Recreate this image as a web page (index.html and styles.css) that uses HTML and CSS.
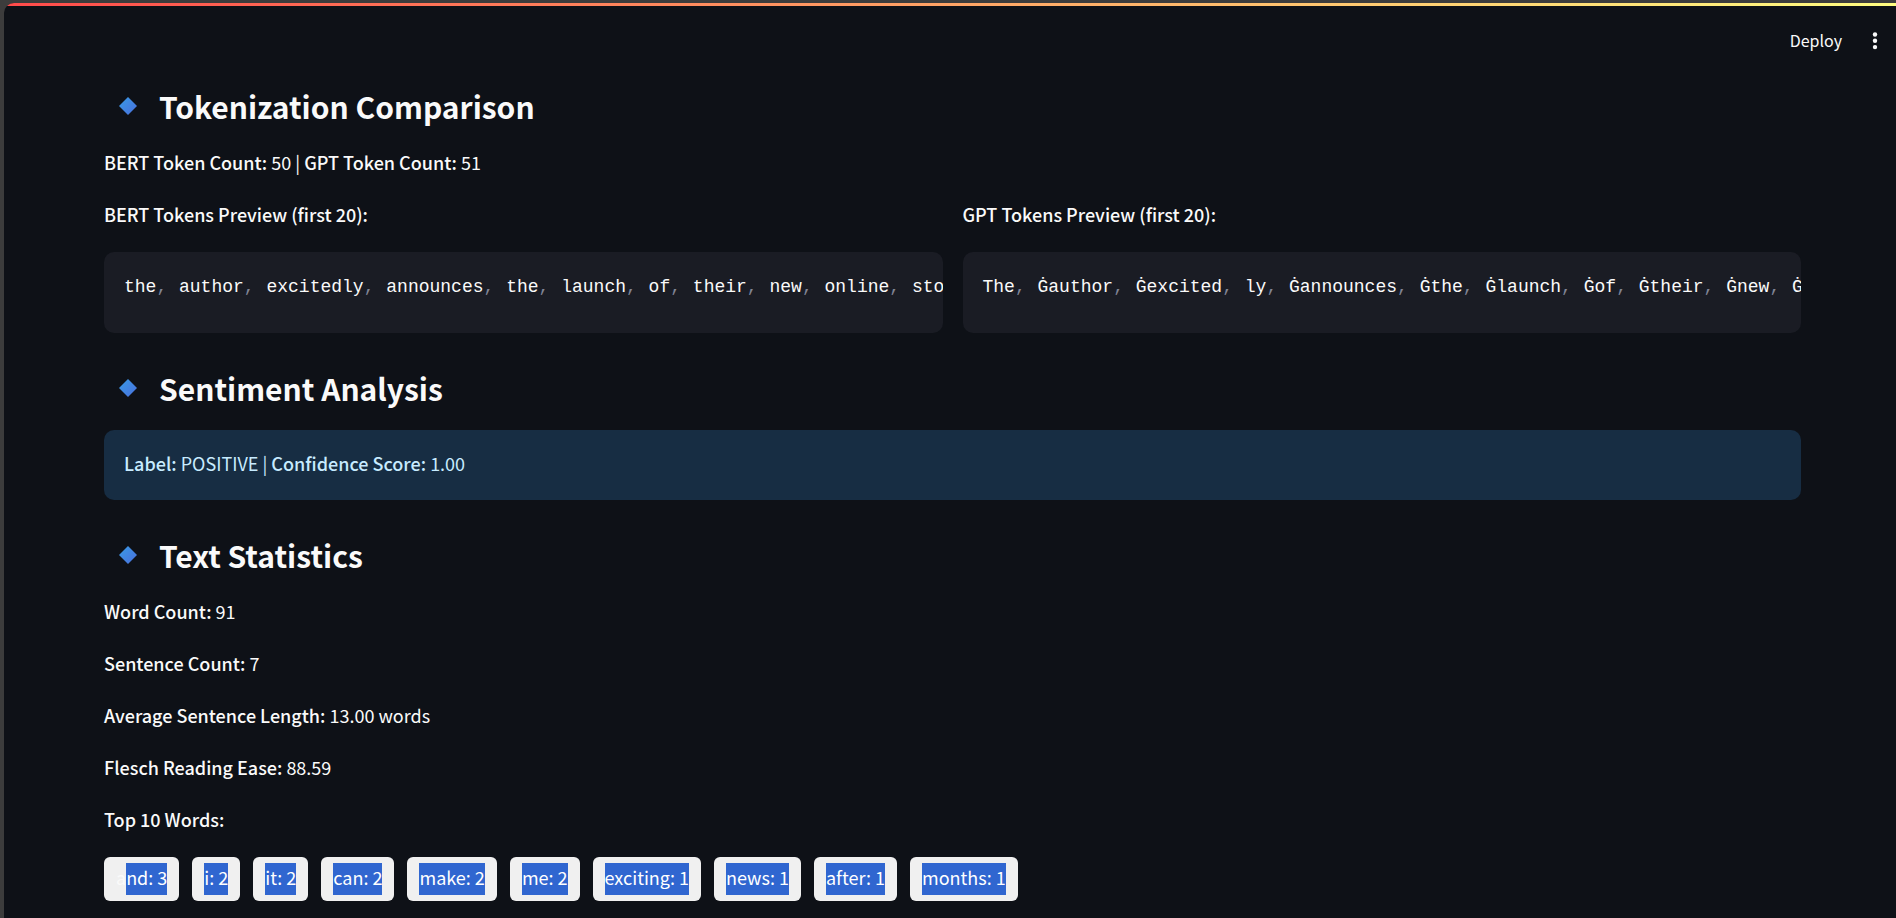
FILE: index.html
```html
<!DOCTYPE html>
<html lang="en">
<head>
<meta charset="utf-8">
<title>Text Analysis</title>
<link rel="stylesheet" href="styles.css">
</head>
<body>
<svg class="defs" aria-hidden="true">
  <defs>
    <linearGradient id="blue" x1="0" y1="0" x2="1" y2="1">
      <stop offset="0" stop-color="#389be6"/>
      <stop offset="1" stop-color="#4a6fdc"/>
    </linearGradient>
    <symbol id="diamond" viewBox="0 0 18 18"><path d="M9 0 18 9 9 18 0 9Z" fill="url(#blue)"/></symbol>
  </defs>
</svg>
<div class="app">
  <div class="decoration"></div>
  <header class="toolbar">
    <button class="deploy" type="button">Deploy</button>
    <button class="menu" type="button" aria-label="Main menu">
      <svg width="6" height="18" viewBox="0 0 6 18" fill="#fafafa"><circle cx="3" cy="2.5" r="2.2"/><circle cx="3" cy="8.8" r="2.2"/><circle cx="3" cy="15.1" r="2.2"/></svg>
    </button>
  </header>
  <main class="content">
    <h2><svg class="mark" aria-hidden="true"><use href="#diamond"/></svg>Tokenization Comparison</h2>
    <p><strong>BERT Token Count:</strong> 50 | <strong>GPT Token Count:</strong> 51</p>
    <div class="columns">
      <section class="column">
        <p><strong>BERT Tokens Preview (first 20):</strong></p>
        <pre class="code"><code>the<i>,</i> author<i>,</i> excitedly<i>,</i> announces<i>,</i> the<i>,</i> launch<i>,</i> of<i>,</i> their<i>,</i> new<i>,</i> online<i>,</i> store</code></pre>
      </section>
      <section class="column">
        <p><strong>GPT Tokens Preview (first 20):</strong></p>
        <pre class="code"><code>The<i>,</i> Ġauthor<i>,</i> Ġexcited<i>,</i> ly<i>,</i> Ġannounces<i>,</i> Ġthe<i>,</i> Ġlaunch<i>,</i> Ġof<i>,</i> Ġtheir<i>,</i> Ġnew<i>,</i> Ġonline</code></pre>
      </section>
    </div>
    <h2><svg class="mark" aria-hidden="true"><use href="#diamond"/></svg>Sentiment Analysis</h2>
    <div class="alert"><strong>Label:</strong> POSITIVE | <strong>Confidence Score:</strong> 1.00</div>
    <h2><svg class="mark" aria-hidden="true"><use href="#diamond"/></svg>Text Statistics</h2>
    <p><strong>Word Count:</strong> 91</p>
    <p><strong>Sentence Count:</strong> 7</p>
    <p><strong>Average Sentence Length:</strong> 13.00 words</p>
    <p><strong>Flesch Reading Ease:</strong> 88.59</p>
    <p><strong>Top 10 Words:</strong></p>
    <div class="chips">
      <span class="chip">a<mark>nd: 3</mark></span>
      <span class="chip"><mark>i: 2</mark></span>
      <span class="chip"><mark>it: 2</mark></span>
      <span class="chip"><mark>can: 2</mark></span>
      <span class="chip"><mark>make: 2</mark></span>
      <span class="chip"><mark>me: 2</mark></span>
      <span class="chip"><mark>exciting: 1</mark></span>
      <span class="chip"><mark>news: 1</mark></span>
      <span class="chip"><mark>after: 1</mark></span>
      <span class="chip"><mark>months: 1</mark></span>
    </div>
  </main>
</div>
</body>
</html>
```
FILE: styles.css
```css
* { box-sizing: border-box; }

body {
  margin: 0;
  padding: 3px 0 0 4px;
  background: #3c3c3c;
  color: #fafafa;
  font: 18px/28px "Noto Sans CJK SC", "Open Sans", sans-serif;
}

.defs { position: absolute; width: 0; height: 0; }

.app {
  min-height: calc(100vh - 3px);
  overflow: hidden;
  border-top-left-radius: 10px;
  background: #0e1117;
}

.decoration {
  height: 3px;
  background: linear-gradient(90deg, #ff4b4b, #fffd80);
}

.toolbar {
  display: flex;
  justify-content: flex-end;
  align-items: center;
  gap: 30px;
  height: 70px;
  padding-right: 18px;
}

.toolbar button {
  padding: 0;
  border: 0;
  background: none;
  color: inherit;
  font: inherit;
  font-size: 16px;
  line-height: 24px;
}

.toolbar .deploy { padding-bottom: 2px; }

.menu { display: flex; }

.content { padding: 0 95px 16px 100px; }

h2 {
  display: flex;
  align-items: center;
  gap: 22px;
  margin: 36px 0 23px;
  padding-left: 15px;
  font-size: 30px;
  font-weight: 700;
  line-height: 38px;
}

h2:first-child { margin-top: 11px; }

.mark { width: 18px; height: 18px; }

p { margin: 0 0 24px; }

strong { font-weight: 500; }

.columns {
  display: grid;
  grid-template-columns: 1fr 1fr;
  gap: 20px;
}

.column { min-width: 0; }

.code {
  height: 81px;
  margin: 0;
  padding: 20px;
  overflow: hidden;
  border-radius: 10px;
  background: #1a1c24;
}

.code code {
  font: 18px/28px "Liberation Mono", monospace;
}

.code i { margin-right: 1px; color: #808495; font-style: normal; }

.alert {
  padding: 19px 20px 23px;
  border-radius: 10px;
  background: #172d43;
  color: #c7ebff;
}

.chips { display: flex; flex-wrap: wrap; gap: 13px; }

.chip {
  display: flex;
  padding: 6px 12px;
  border-radius: 6px;
  background: #f0f0f0;
  color: #fafafa;
}

.chip mark {
  padding-bottom: 4px;
  background: #3066d0;
  color: #ffffff;
}
```
